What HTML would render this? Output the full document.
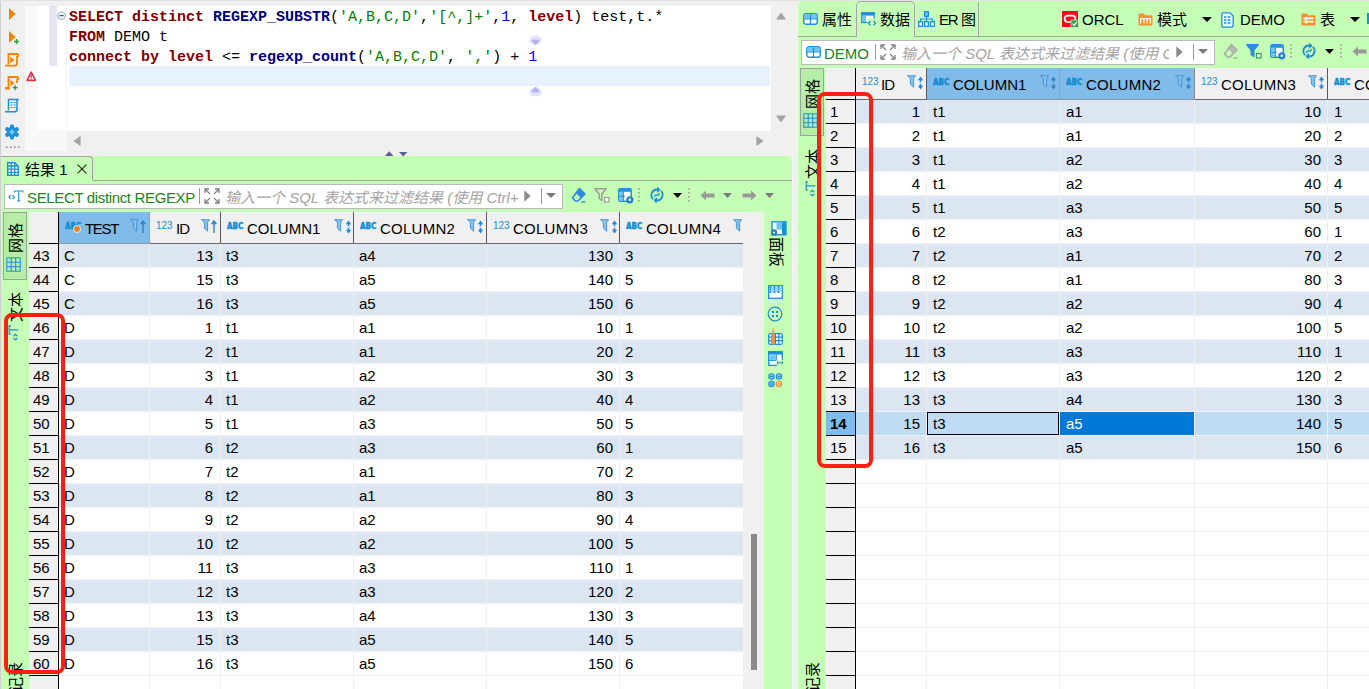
<!DOCTYPE html>
<html><head><meta charset="utf-8"><title>DBeaver</title>
<style>
html,body{margin:0;padding:0}
body{width:1369px;height:689px;overflow:hidden;position:relative;background:#f0f0f0;font-family:"Liberation Sans","Noto Sans CJK SC",sans-serif;font-size:15px;color:#000}
body div,body svg{position:absolute;display:block}
.t{white-space:nowrap;line-height:20px;height:20px}
.r{white-space:nowrap;line-height:20px;height:20px;text-align:right}
.code{font-family:"Liberation Mono",monospace;font-size:15px;white-space:pre;line-height:20px;height:20px;letter-spacing:0px}
.k{color:#800000;font-weight:bold}.f{color:#000080;font-weight:bold}.s{color:#008000}.n{color:#0000ff}
.ph{color:#a4a4a4;font-style:italic;white-space:nowrap;line-height:20px;overflow:hidden}
.rot{white-space:nowrap;line-height:16px;height:16px;font-size:15px;transform-origin:0 0}
</style></head><body>
<div style="left:0px;top:0px;width:1369px;height:1px;background:#e2e2e2;"></div>
<div style="left:0px;top:1px;width:1px;height:688px;background:#cfcfcf;"></div>
<div style="left:25px;top:6px;width:42px;height:145px;background:#f8f8f8;"></div>
<div style="left:37px;top:6px;width:30px;height:124px;background:#fff;"></div>
<div style="left:49px;top:6px;width:8px;height:60px;background:#e4e4f2;"></div>
<div style="left:66px;top:6px;width:1px;height:125px;background:#f2f2f2;"></div>
<div style="left:67px;top:6px;width:704px;height:125px;background:#fff;"></div>
<div style="left:69px;top:66px;width:701px;height:20px;background:#e8f2fe;"></div>
<svg style="left:57px;top:11px;" width="10" height="10" viewBox="0 0 10 10"><circle cx="4.6" cy="4.6" r="3.9" fill="#eef1f6" stroke="#9aa7b8" stroke-width="0.9"/><path d="M2.4 4.6 H6.8" stroke="#44546a" stroke-width="1.1"/></svg>
<div class="code" style="left:69px;top:8px"><span class="k">SELECT distinct</span> <span class="f">REGEXP_SUBSTR</span>(<span class="s">'A,B,C,D'</span>,<span class="s">'[^,]+'</span>,<span class="n">1</span>, <span class="k">level</span>) test,t.*</div>
<div class="code" style="left:69px;top:28px"><span class="k">FROM</span> DEMO t</div>
<div class="code" style="left:69px;top:48px"><span class="k">connect by level</span> &lt;= <span class="f">regexp_count</span>(<span class="s">'A,B,C,D'</span>, <span class="s">','</span>) + <span class="n">1</span></div>
<svg style="left:529px;top:35px;" width="13" height="11" viewBox="0 0 13 11"><ellipse cx="6.5" cy="5" rx="6.2" ry="4.6" fill="#e2e2fb"/><path d="M2.2 5.4 Q6.5 3.4 10.8 5.4 L6.5 10.4 Z" fill="#b4b4ec"/></svg>
<svg style="left:529px;top:86px;" width="13" height="11" viewBox="0 0 13 11"><ellipse cx="6.5" cy="6" rx="6.2" ry="4.6" fill="#e2e2fb"/><path d="M2.2 5.6 Q6.5 7.6 10.8 5.6 L6.5 0.6 Z" fill="#b4b4ec"/></svg>
<svg style="left:776px;top:12px;" width="10" height="8" viewBox="0 0 10 8"><path d="M5 0.5 L9.7 7 Q9.7 7.6 9 7.6 H1 Q0.3 7.6 0.3 7 Z" fill="#a3a3a3"/></svg>
<svg style="left:776px;top:115px;" width="10" height="8" viewBox="0 0 10 8"><path d="M5 7.5 L9.7 1 Q9.7 0.4 9 0.4 H1 Q0.3 0.4 0.3 1 Z" fill="#a3a3a3"/></svg>
<svg style="left:73px;top:136px;" width="8" height="10" viewBox="0 0 8 10"><path d="M0.5 5 L7 0.3 Q7.6 0.3 7.6 1 V9 Q7.6 9.7 7 9.7 Z" fill="#a3a3a3"/></svg>
<svg style="left:756px;top:136px;" width="8" height="10" viewBox="0 0 8 10"><path d="M7.5 5 L1 0.3 Q0.4 0.3 0.4 1 V9 Q0.4 9.7 1 9.7 Z" fill="#a3a3a3"/></svg>
<svg style="left:385px;top:151px;" width="9" height="5" viewBox="0 0 9 5"><path d="M0 5 L4.2 0.3 L8.4 5 Z" fill="#5c5c9c"/></svg>
<svg style="left:399px;top:152px;" width="9" height="5" viewBox="0 0 9 5"><path d="M0 0 H8.4 L4.2 4.6 Z" fill="#5c5c9c"/></svg>
<svg style="left:8px;top:7px;" width="9" height="14" viewBox="0 0 9 14"><path d="M1 1 L7.6 7 L1 13 Z" fill="#f28500"/></svg>
<svg style="left:8px;top:30px;" width="12" height="15" viewBox="0 0 12 15"><path d="M1 1 L7.6 7 L1 13 Z" fill="#f28500"/><path d="M8.5 9 V14 M6 11.5 H11" stroke="#2e9a2e" stroke-width="1.3"/></svg>
<svg style="left:4px;top:52px;" width="16" height="16" viewBox="0 0 16 16"><g fill="none" stroke="#f28500" stroke-width="1.8"><path d="M4.5 12.5 V2 H14.5 M14 2 V5"/><path d="M1 13.6 H11 Q13 13.6 13 11 V4"/></g><path d="M6.3 4.8 L10.6 8 L6.3 11.2 Z" fill="#f28500"/></svg>
<svg style="left:4px;top:75px;" width="16" height="16" viewBox="0 0 16 16"><g fill="none" stroke="#f28500" stroke-width="1.8"><path d="M4.5 12.5 V2 H14.5 M14 2 V5"/><path d="M13 8 V4"/></g><path d="M6.3 4.8 L10.6 8 L6.3 11.2 Z" fill="#f28500"/><rect x="1" y="12" width="5" height="2.6" fill="#f28500"/><path d="M11.2 10.2 V15.2 M8.7 12.7 H13.7" stroke="#2e9a2e" stroke-width="1.3"/></svg>
<svg style="left:4px;top:98px;" width="16" height="16" viewBox="0 0 16 16"><g fill="none" stroke="#1b8fd6" stroke-width="1.5"><path d="M4.5 12.5 V1.5 H14.8"/><path d="M1 13.8 H11 Q13 13.8 13 11 V2"/><path d="M6.5 4.5 H8.5 M9.8 4.5 H11.6 M6.5 7 H8.5 M9.8 7 H11.6 M6.5 9.5 H8.5 M9.8 9.5 H11.6" stroke-width="1.1"/></g></svg>
<svg style="left:4px;top:124px;" width="16" height="16" viewBox="0 0 16 16"><g transform="translate(8,8)"><g fill="#1b8fd6"><circle r="5.4"/><rect x="-1.9" y="-7.4" width="3.8" height="14.8" rx="0.8"/><rect x="-1.9" y="-7.4" width="3.8" height="14.8" rx="0.8" transform="rotate(60)"/><rect x="-1.9" y="-7.4" width="3.8" height="14.8" rx="0.8" transform="rotate(120)"/></g><path d="M0 -3 L3 0 L0 3 L-3 0 Z" fill="#6cc4f2"/></g></svg>
<svg style="left:6px;top:146px;" width="15" height="3" viewBox="0 0 15 3"><path d="M0 1.2 H15" stroke="#8c8c8c" stroke-width="1.6" stroke-dasharray="1.6 2.4"/></svg>
<svg style="left:26px;top:71px;" width="11" height="11" viewBox="0 0 11 11"><path d="M5.2 1.2 L9.4 9.4 H1 Z" fill="#fff" stroke="#e0304a" stroke-width="1.6" stroke-linejoin="round"/><path d="M5.2 3.8 V6.8 M5.2 7.6 V8.6" stroke="#e0304a" stroke-width="1.4"/></svg>
<div style="left:1px;top:156px;width:791px;height:533px;background:#c5ffb5;border-top-right-radius:5px"></div>
<div style="left:792px;top:157px;width:1px;height:532px;background:#f8f8f8;"></div>
<div style="left:1px;top:156px;width:92px;height:24px;border-top:1px solid #a3a3a3;border-right:1px solid #a3a3a3;border-top-right-radius:4px;box-sizing:border-box"></div>
<div style="left:93px;top:180px;width:699px;height:1px;background:#a3a3a3;"></div>
<svg style="left:7px;top:162px;" width="12" height="14" viewBox="0 0 12 14"><path d="M0.7 0.7 H7.8 L11.3 4.2 V13.3 H0.7 Z" fill="#fff" stroke="#1b8fd6" stroke-width="1.4"/><path d="M0.7 4 H11 M0.7 7.2 H11 M0.7 10.3 H11 M4.2 0.7 V13.3 M7.7 0.7 V13.3" stroke="#1b8fd6" stroke-width="1.3"/></svg>
<div class="t" style="left:25px;top:160px;">结果 1</div>
<svg style="left:77px;top:164px;" width="10" height="10" viewBox="0 0 10 10"><path d="M0.6 0.6 L9.4 9.4 M9.4 0.6 L0.6 9.4" stroke="#222" stroke-width="1.1"/></svg>
<div style="left:4px;top:184px;width:559px;height:25px;background:#fff;border:1px solid #b9b9b9;box-sizing:border-box"></div>
<svg style="left:8px;top:190px;" width="16" height="12" viewBox="0 0 16 12"><g fill="none" stroke="#1b8fd6" stroke-width="1.1"><path d="M2.6 5.2 L0.8 7 L2.6 8.8 M4.6 5.2 L6.4 7 L4.6 8.8"/><path d="M6.5 1 H15 M10.7 1 V11 M9 11 H12.5 M6.5 1 V2.6 M15 1 V2.6"/></g></svg>
<div class="t" style="left:27px;top:188px;color:#17851b;letter-spacing:-0.35px">SELECT distinct REGEXP</div>
<div style="left:199px;top:188px;width:1px;height:16px;background:#9a9a9a;"></div>
<svg style="left:204px;top:188px;" width="16" height="16" viewBox="0 0 16 16"><g stroke="#808080" stroke-width="1.3" fill="none"><path d="M1 5 V1 H5 M1 1 L6 6"/><path d="M11 1 H15 V5 M15 1 L10 6"/><path d="M1 11 V15 H5 M1 15 L6 10"/><path d="M11 15 H15 V11 M15 15 L10 10"/></g></svg>
<div class="ph" style="left:225px;top:188px;width:294px;height:20px">输入一个 SQL 表达式来过滤结果 (使用 Ctrl+空格)</div>
<svg style="left:524px;top:190px;" width="7" height="12" viewBox="0 0 7 12"><path d="M0.3 0.3 L6.7 6 L0.3 11.7 Z" fill="#8c8c8c"/></svg>
<div style="left:541px;top:188px;width:1px;height:16px;background:#9a9a9a;"></div>
<svg style="left:546px;top:193px;" width="10" height="5" viewBox="0 0 10 5"><path d="M0 0 H10 L5.0 5 Z" fill="#7a7a7a"/></svg>
<svg style="left:571px;top:187px;" width="16" height="16" viewBox="0 0 16 16"><path d="M8.5 1.5 L14 7 L7 14 L4.5 14 L1.5 11 Z" fill="none" stroke="#2d8be0" stroke-width="1.6" stroke-linejoin="round"/><path d="M8.5 1.5 L14 7 L10 11 L4.5 5.5 Z" fill="#2d8be0"/><path d="M10 15 H14.5" stroke="#2d8be0" stroke-width="1.3"/></svg>
<svg style="left:594px;top:188px;" width="16" height="15" viewBox="0 0 16 15"><path d="M0.8 0.8 H12.2 L7.8 6 V12.5 L5.2 10.5 V6 Z" fill="none" stroke="#9a9a9a" stroke-width="1.5" stroke-linejoin="round"/><rect x="10.5" y="9.5" width="4.5" height="4.5" fill="#fff" stroke="#9a9a9a" stroke-width="1.2"/></svg>
<svg style="left:618px;top:188px;" width="16" height="16" viewBox="0 0 16 16"><rect x="0.8" y="0.8" width="12.4" height="12.4" rx="1.5" fill="#fff" stroke="#1b8fd6" stroke-width="1.5"/><rect x="1.2" y="1.2" width="11.6" height="2.6" fill="#1b8fd6"/><rect x="1.5" y="4" width="3.6" height="8.6" fill="#7cc8f4"/><path d="M5.3 4 V13 M1 8.3 H7" stroke="#1b8fd6" stroke-width="1.1"/><circle cx="11.8" cy="11.8" r="3.6" fill="#2a7fd0"/><circle cx="11.8" cy="11.8" r="1.2" fill="#fff"/></svg>
<svg style="left:638px;top:188px;" width="2" height="14" viewBox="0 0 2 14"><path d="M1 0 V14" stroke="#b08a9a" stroke-width="1.6" stroke-dasharray="1.6 2.4"/></svg>
<svg style="left:649px;top:187px;" width="16" height="16" viewBox="0 0 16 16"><g transform="rotate(-40 8 8)"><g fill="none" stroke="#1b8fd6" stroke-width="1.8"><path d="M2.4 8.6 A5.6 5.6 0 0 1 12 4.2"/><path d="M13.6 7.4 A5.6 5.6 0 0 1 4 11.8"/><path d="M5.2 8.4 Q6.2 5.6 8 8 T10.8 7.6" stroke-width="1.3"/></g><path d="M13.9 1.6 V6.4 H9.1 Z M2.1 14.4 V9.6 H6.9 Z" fill="#1b8fd6"/></g></svg>
<svg style="left:673px;top:193px;" width="9" height="5" viewBox="0 0 9 5"><path d="M0 0 H9 L4.5 5 Z" fill="#000"/></svg>
<svg style="left:688px;top:188px;" width="2" height="14" viewBox="0 0 2 14"><path d="M1 0 V14" stroke="#b08a9a" stroke-width="1.6" stroke-dasharray="1.6 2.4"/></svg>
<svg style="left:700px;top:190px;" width="15" height="11" viewBox="0 0 15 11"><path d="M0.5 5.5 L6 0.5 V3.5 H14.5 V7.5 H6 V10.5 Z" fill="#9a9a9a"/></svg>
<svg style="left:723px;top:193px;" width="9" height="5" viewBox="0 0 9 5"><path d="M0 0 H9 L4.5 5 Z" fill="#7a7a7a"/></svg>
<svg style="left:742px;top:190px;" width="15" height="11" viewBox="0 0 15 11"><path d="M14.5 5.5 L9 0.5 V3.5 H0.5 V7.5 H9 V10.5 Z" fill="#9a9a9a"/></svg>
<svg style="left:765px;top:193px;" width="9" height="5" viewBox="0 0 9 5"><path d="M0 0 H9 L4.5 5 Z" fill="#7a7a7a"/></svg>
<div style="left:3px;top:212px;width:24px;height:68px;background:#b6eda9;border:1px solid #9aa59a;box-sizing:border-box"></div>
<div class="rot" style="left:8px;top:253px;transform:rotate(-90deg)">网格</div>
<svg style="left:6px;top:257px;" width="15" height="15" viewBox="0 0 15 15"><g fill="none" stroke="#1b8fd6" stroke-width="1"><rect x="0.8" y="0.8" width="13.4" height="13.4"/><path d="M0.8 5.2 H14.2 M0.8 9.7 H14.2 M5.2 0.8 V14.2 M9.7 0.8 V14.2"/></g></svg>
<div class="rot" style="left:8px;top:322px;transform:rotate(-90deg)">文本</div>
<svg style="left:8px;top:325px;" width="11" height="16" viewBox="0 0 11 16"><g fill="none" stroke="#1b8fd6" stroke-width="1.2"><path d="M0.4 0.8 H3 M0.4 9 H3 M1.2 0.8 V9 M1.2 4.9 H10.4"/><path d="M5.4 11.2 L7.4 9.4 L9.4 11.2 M5.4 13 L7.4 14.8 L9.4 13"/></g></svg>
<div class="rot" style="left:8px;top:692px;transform:rotate(-90deg)">记录</div>
<div style="left:29px;top:212px;width:29px;height:477px;background:#f0f0f0;"></div>
<div style="left:59px;top:212px;width:684px;height:32px;background:#f0f0f0;"></div>
<div style="left:59px;top:244px;width:684px;height:445px;background:#fff;"></div>
<div style="left:743px;top:212px;width:21px;height:477px;background:#f0f0f0;"></div>
<div style="left:59px;top:212px;width:90px;height:31px;background:#80bbea;"></div>
<div style="left:59px;top:244px;width:684px;height:24px;background:#dce6f2;"></div>
<div style="left:59px;top:292px;width:684px;height:24px;background:#dce6f2;"></div>
<div style="left:59px;top:340px;width:684px;height:24px;background:#dce6f2;"></div>
<div style="left:59px;top:388px;width:684px;height:24px;background:#dce6f2;"></div>
<div style="left:59px;top:436px;width:684px;height:24px;background:#dce6f2;"></div>
<div style="left:59px;top:484px;width:684px;height:24px;background:#dce6f2;"></div>
<div style="left:59px;top:532px;width:684px;height:24px;background:#dce6f2;"></div>
<div style="left:59px;top:580px;width:684px;height:24px;background:#dce6f2;"></div>
<div style="left:59px;top:628px;width:684px;height:24px;background:#dce6f2;"></div>
<div style="left:59px;top:267px;width:684px;height:1px;background:#efefef;"></div>
<div style="left:59px;top:291px;width:684px;height:1px;background:#efefef;"></div>
<div style="left:59px;top:315px;width:684px;height:1px;background:#efefef;"></div>
<div style="left:59px;top:339px;width:684px;height:1px;background:#efefef;"></div>
<div style="left:59px;top:363px;width:684px;height:1px;background:#efefef;"></div>
<div style="left:59px;top:387px;width:684px;height:1px;background:#efefef;"></div>
<div style="left:59px;top:411px;width:684px;height:1px;background:#efefef;"></div>
<div style="left:59px;top:435px;width:684px;height:1px;background:#efefef;"></div>
<div style="left:59px;top:459px;width:684px;height:1px;background:#efefef;"></div>
<div style="left:59px;top:483px;width:684px;height:1px;background:#efefef;"></div>
<div style="left:59px;top:507px;width:684px;height:1px;background:#efefef;"></div>
<div style="left:59px;top:531px;width:684px;height:1px;background:#efefef;"></div>
<div style="left:59px;top:555px;width:684px;height:1px;background:#efefef;"></div>
<div style="left:59px;top:579px;width:684px;height:1px;background:#efefef;"></div>
<div style="left:59px;top:603px;width:684px;height:1px;background:#efefef;"></div>
<div style="left:59px;top:627px;width:684px;height:1px;background:#efefef;"></div>
<div style="left:59px;top:651px;width:684px;height:1px;background:#efefef;"></div>
<div style="left:59px;top:675px;width:684px;height:1px;background:#efefef;"></div>
<div style="left:149px;top:244px;width:1px;height:445px;background:#efefef;"></div>
<div style="left:220px;top:244px;width:1px;height:445px;background:#efefef;"></div>
<div style="left:353px;top:244px;width:1px;height:445px;background:#efefef;"></div>
<div style="left:486px;top:244px;width:1px;height:445px;background:#efefef;"></div>
<div style="left:619px;top:244px;width:1px;height:445px;background:#efefef;"></div>
<div style="left:149px;top:212px;width:1px;height:31px;background:#93a5b5;"></div>
<div style="left:220px;top:212px;width:1px;height:32px;background:#5a5a5a;"></div>
<div style="left:353px;top:212px;width:1px;height:32px;background:#5a5a5a;"></div>
<div style="left:486px;top:212px;width:1px;height:32px;background:#5a5a5a;"></div>
<div style="left:619px;top:212px;width:1px;height:32px;background:#5a5a5a;"></div>
<div style="left:59px;top:243px;width:684px;height:1px;background:#6a6a6a;"></div>
<div style="left:59px;top:243px;width:91px;height:1px;background:#8a99a6;"></div>
<div style="left:58px;top:212px;width:1px;height:477px;background:#000;"></div>
<div style="left:29px;top:243px;width:30px;height:1px;background:#000;"></div>
<div style="left:29px;top:267px;width:30px;height:1px;background:#000;"></div>
<div style="left:29px;top:291px;width:30px;height:1px;background:#000;"></div>
<div style="left:29px;top:315px;width:30px;height:1px;background:#000;"></div>
<div style="left:29px;top:339px;width:30px;height:1px;background:#000;"></div>
<div style="left:29px;top:363px;width:30px;height:1px;background:#000;"></div>
<div style="left:29px;top:387px;width:30px;height:1px;background:#000;"></div>
<div style="left:29px;top:411px;width:30px;height:1px;background:#000;"></div>
<div style="left:29px;top:435px;width:30px;height:1px;background:#000;"></div>
<div style="left:29px;top:459px;width:30px;height:1px;background:#000;"></div>
<div style="left:29px;top:483px;width:30px;height:1px;background:#000;"></div>
<div style="left:29px;top:507px;width:30px;height:1px;background:#000;"></div>
<div style="left:29px;top:531px;width:30px;height:1px;background:#000;"></div>
<div style="left:29px;top:555px;width:30px;height:1px;background:#000;"></div>
<div style="left:29px;top:579px;width:30px;height:1px;background:#000;"></div>
<div style="left:29px;top:603px;width:30px;height:1px;background:#000;"></div>
<div style="left:29px;top:627px;width:30px;height:1px;background:#000;"></div>
<div style="left:29px;top:651px;width:30px;height:1px;background:#000;"></div>
<div style="left:29px;top:675px;width:30px;height:1px;background:#000;"></div>
<div class="t" style="left:33px;top:246px;">43</div>
<div class="t" style="left:64px;top:246px;">C</div>
<div class="r" style="left:150px;top:246px;width:63px">13</div>
<div class="t" style="left:226px;top:246px;">t3</div>
<div class="t" style="left:359px;top:246px;">a4</div>
<div class="r" style="left:487px;top:246px;width:126px">130</div>
<div class="t" style="left:625px;top:246px;">3</div>
<div class="t" style="left:33px;top:270px;">44</div>
<div class="t" style="left:64px;top:270px;">C</div>
<div class="r" style="left:150px;top:270px;width:63px">15</div>
<div class="t" style="left:226px;top:270px;">t3</div>
<div class="t" style="left:359px;top:270px;">a5</div>
<div class="r" style="left:487px;top:270px;width:126px">140</div>
<div class="t" style="left:625px;top:270px;">5</div>
<div class="t" style="left:33px;top:294px;">45</div>
<div class="t" style="left:64px;top:294px;">C</div>
<div class="r" style="left:150px;top:294px;width:63px">16</div>
<div class="t" style="left:226px;top:294px;">t3</div>
<div class="t" style="left:359px;top:294px;">a5</div>
<div class="r" style="left:487px;top:294px;width:126px">150</div>
<div class="t" style="left:625px;top:294px;">6</div>
<div class="t" style="left:33px;top:318px;">46</div>
<div class="t" style="left:64px;top:318px;">D</div>
<div class="r" style="left:150px;top:318px;width:63px">1</div>
<div class="t" style="left:226px;top:318px;">t1</div>
<div class="t" style="left:359px;top:318px;">a1</div>
<div class="r" style="left:487px;top:318px;width:126px">10</div>
<div class="t" style="left:625px;top:318px;">1</div>
<div class="t" style="left:33px;top:342px;">47</div>
<div class="t" style="left:64px;top:342px;">D</div>
<div class="r" style="left:150px;top:342px;width:63px">2</div>
<div class="t" style="left:226px;top:342px;">t1</div>
<div class="t" style="left:359px;top:342px;">a1</div>
<div class="r" style="left:487px;top:342px;width:126px">20</div>
<div class="t" style="left:625px;top:342px;">2</div>
<div class="t" style="left:33px;top:366px;">48</div>
<div class="t" style="left:64px;top:366px;">D</div>
<div class="r" style="left:150px;top:366px;width:63px">3</div>
<div class="t" style="left:226px;top:366px;">t1</div>
<div class="t" style="left:359px;top:366px;">a2</div>
<div class="r" style="left:487px;top:366px;width:126px">30</div>
<div class="t" style="left:625px;top:366px;">3</div>
<div class="t" style="left:33px;top:390px;">49</div>
<div class="t" style="left:64px;top:390px;">D</div>
<div class="r" style="left:150px;top:390px;width:63px">4</div>
<div class="t" style="left:226px;top:390px;">t1</div>
<div class="t" style="left:359px;top:390px;">a2</div>
<div class="r" style="left:487px;top:390px;width:126px">40</div>
<div class="t" style="left:625px;top:390px;">4</div>
<div class="t" style="left:33px;top:414px;">50</div>
<div class="t" style="left:64px;top:414px;">D</div>
<div class="r" style="left:150px;top:414px;width:63px">5</div>
<div class="t" style="left:226px;top:414px;">t1</div>
<div class="t" style="left:359px;top:414px;">a3</div>
<div class="r" style="left:487px;top:414px;width:126px">50</div>
<div class="t" style="left:625px;top:414px;">5</div>
<div class="t" style="left:33px;top:438px;">51</div>
<div class="t" style="left:64px;top:438px;">D</div>
<div class="r" style="left:150px;top:438px;width:63px">6</div>
<div class="t" style="left:226px;top:438px;">t2</div>
<div class="t" style="left:359px;top:438px;">a3</div>
<div class="r" style="left:487px;top:438px;width:126px">60</div>
<div class="t" style="left:625px;top:438px;">1</div>
<div class="t" style="left:33px;top:462px;">52</div>
<div class="t" style="left:64px;top:462px;">D</div>
<div class="r" style="left:150px;top:462px;width:63px">7</div>
<div class="t" style="left:226px;top:462px;">t2</div>
<div class="t" style="left:359px;top:462px;">a1</div>
<div class="r" style="left:487px;top:462px;width:126px">70</div>
<div class="t" style="left:625px;top:462px;">2</div>
<div class="t" style="left:33px;top:486px;">53</div>
<div class="t" style="left:64px;top:486px;">D</div>
<div class="r" style="left:150px;top:486px;width:63px">8</div>
<div class="t" style="left:226px;top:486px;">t2</div>
<div class="t" style="left:359px;top:486px;">a1</div>
<div class="r" style="left:487px;top:486px;width:126px">80</div>
<div class="t" style="left:625px;top:486px;">3</div>
<div class="t" style="left:33px;top:510px;">54</div>
<div class="t" style="left:64px;top:510px;">D</div>
<div class="r" style="left:150px;top:510px;width:63px">9</div>
<div class="t" style="left:226px;top:510px;">t2</div>
<div class="t" style="left:359px;top:510px;">a2</div>
<div class="r" style="left:487px;top:510px;width:126px">90</div>
<div class="t" style="left:625px;top:510px;">4</div>
<div class="t" style="left:33px;top:534px;">55</div>
<div class="t" style="left:64px;top:534px;">D</div>
<div class="r" style="left:150px;top:534px;width:63px">10</div>
<div class="t" style="left:226px;top:534px;">t2</div>
<div class="t" style="left:359px;top:534px;">a2</div>
<div class="r" style="left:487px;top:534px;width:126px">100</div>
<div class="t" style="left:625px;top:534px;">5</div>
<div class="t" style="left:33px;top:558px;">56</div>
<div class="t" style="left:64px;top:558px;">D</div>
<div class="r" style="left:150px;top:558px;width:63px">11</div>
<div class="t" style="left:226px;top:558px;">t3</div>
<div class="t" style="left:359px;top:558px;">a3</div>
<div class="r" style="left:487px;top:558px;width:126px">110</div>
<div class="t" style="left:625px;top:558px;">1</div>
<div class="t" style="left:33px;top:582px;">57</div>
<div class="t" style="left:64px;top:582px;">D</div>
<div class="r" style="left:150px;top:582px;width:63px">12</div>
<div class="t" style="left:226px;top:582px;">t3</div>
<div class="t" style="left:359px;top:582px;">a3</div>
<div class="r" style="left:487px;top:582px;width:126px">120</div>
<div class="t" style="left:625px;top:582px;">2</div>
<div class="t" style="left:33px;top:606px;">58</div>
<div class="t" style="left:64px;top:606px;">D</div>
<div class="r" style="left:150px;top:606px;width:63px">13</div>
<div class="t" style="left:226px;top:606px;">t3</div>
<div class="t" style="left:359px;top:606px;">a4</div>
<div class="r" style="left:487px;top:606px;width:126px">130</div>
<div class="t" style="left:625px;top:606px;">3</div>
<div class="t" style="left:33px;top:630px;">59</div>
<div class="t" style="left:64px;top:630px;">D</div>
<div class="r" style="left:150px;top:630px;width:63px">15</div>
<div class="t" style="left:226px;top:630px;">t3</div>
<div class="t" style="left:359px;top:630px;">a5</div>
<div class="r" style="left:487px;top:630px;width:126px">140</div>
<div class="t" style="left:625px;top:630px;">5</div>
<div class="t" style="left:33px;top:654px;">60</div>
<div class="t" style="left:64px;top:654px;">D</div>
<div class="r" style="left:150px;top:654px;width:63px">16</div>
<div class="t" style="left:226px;top:654px;">t3</div>
<div class="t" style="left:359px;top:654px;">a5</div>
<div class="r" style="left:487px;top:654px;width:126px">150</div>
<div class="t" style="left:625px;top:654px;">6</div>
<svg style="left:65px;top:221px;" width="18" height="10" viewBox="0 0 18 10"><text x="0" y="8.2" font-family="DejaVu Sans, sans-serif" font-weight="700" font-size="8.6" textLength="16.2" lengthAdjust="spacingAndGlyphs" fill="#0f8bd3" stroke="#0f8bd3" stroke-width="0.5">ABC</text></svg>
<svg style="left:73px;top:225px;" width="8" height="8" viewBox="0 0 8 8"><circle cx="4" cy="4" r="3.6" fill="#e8842c" stroke="#fff" stroke-width="0.8"/></svg>
<div class="t" style="left:85px;top:219px;letter-spacing:-1.3px">TEST</div>
<svg style="left:130px;top:219px;" width="10" height="14" viewBox="0 0 10 14"><path d="M0.5 0.7 H8.5 L6.6 3.4 V12.2 L3.4 9.2 V3.4 Z" fill="#86c4f0" stroke="#3d8fd0" stroke-width="0.9" stroke-linejoin="round"/></svg>
<svg style="left:140px;top:220px;" width="6" height="14" viewBox="0 0 6 14"><path d="M3 1 V13 M0.6 4.2 L3 1 L5.4 4.2" fill="none" stroke="#2f86cf" stroke-width="1.5"/></svg>
<svg style="left:156px;top:220px;" width="18" height="11" viewBox="0 0 18 11"><text x="0" y="9" font-family="Liberation Sans, sans-serif" font-size="11" textLength="16.5" lengthAdjust="spacingAndGlyphs" fill="#1b8fd6">123</text></svg>
<div class="t" style="left:176px;top:219px;letter-spacing:-0.9px">ID</div>
<svg style="left:201px;top:219px;" width="10" height="14" viewBox="0 0 10 14"><path d="M0.5 0.7 H8.5 L6.6 3.4 V12.2 L3.4 9.2 V3.4 Z" fill="#86c4f0" stroke="#3d8fd0" stroke-width="0.9" stroke-linejoin="round"/></svg>
<svg style="left:211px;top:220px;" width="6" height="14" viewBox="0 0 6 14"><path d="M3 1 V13 M0.6 4.2 L3 1 L5.4 4.2" fill="none" stroke="#2f86cf" stroke-width="1.5"/></svg>
<svg style="left:227px;top:221px;" width="18" height="10" viewBox="0 0 18 10"><text x="0" y="8.2" font-family="DejaVu Sans, sans-serif" font-weight="700" font-size="8.6" textLength="16.2" lengthAdjust="spacingAndGlyphs" fill="#0f8bd3" stroke="#0f8bd3" stroke-width="0.5">ABC</text></svg>
<div class="t" style="left:247px;top:219px;">COLUMN1</div>
<svg style="left:334px;top:219px;" width="10" height="14" viewBox="0 0 10 14"><path d="M0.5 0.7 H8.5 L6.6 3.4 V12.2 L3.4 9.2 V3.4 Z" fill="#86c4f0" stroke="#3d8fd0" stroke-width="0.9" stroke-linejoin="round"/></svg>
<svg style="left:345px;top:220px;" width="7" height="14" viewBox="0 0 7 14"><path d="M3.5 2 V6.2 M3.5 7.8 V12" fill="none" stroke="#2f86cf" stroke-width="1.6"/><path d="M0.8 4.2 L3.5 0.6 L6.2 4.2 Z M0.8 9.8 L3.5 13.4 L6.2 9.8 Z" fill="#2f86cf"/></svg>
<svg style="left:360px;top:221px;" width="18" height="10" viewBox="0 0 18 10"><text x="0" y="8.2" font-family="DejaVu Sans, sans-serif" font-weight="700" font-size="8.6" textLength="16.2" lengthAdjust="spacingAndGlyphs" fill="#0f8bd3" stroke="#0f8bd3" stroke-width="0.5">ABC</text></svg>
<div class="t" style="left:380px;top:219px;letter-spacing:0.25px">COLUMN2</div>
<svg style="left:467px;top:219px;" width="10" height="14" viewBox="0 0 10 14"><path d="M0.5 0.7 H8.5 L6.6 3.4 V12.2 L3.4 9.2 V3.4 Z" fill="#86c4f0" stroke="#3d8fd0" stroke-width="0.9" stroke-linejoin="round"/></svg>
<svg style="left:477px;top:220px;" width="7" height="14" viewBox="0 0 7 14"><path d="M3.5 2 V6.2 M3.5 7.8 V12" fill="none" stroke="#2f86cf" stroke-width="1.6"/><path d="M0.8 4.2 L3.5 0.6 L6.2 4.2 Z M0.8 9.8 L3.5 13.4 L6.2 9.8 Z" fill="#2f86cf"/></svg>
<svg style="left:493px;top:220px;" width="18" height="11" viewBox="0 0 18 11"><text x="0" y="9" font-family="Liberation Sans, sans-serif" font-size="11" textLength="16.5" lengthAdjust="spacingAndGlyphs" fill="#1b8fd6">123</text></svg>
<div class="t" style="left:513px;top:219px;letter-spacing:0.25px">COLUMN3</div>
<svg style="left:600px;top:219px;" width="10" height="14" viewBox="0 0 10 14"><path d="M0.5 0.7 H8.5 L6.6 3.4 V12.2 L3.4 9.2 V3.4 Z" fill="#86c4f0" stroke="#3d8fd0" stroke-width="0.9" stroke-linejoin="round"/></svg>
<svg style="left:611px;top:220px;" width="7" height="14" viewBox="0 0 7 14"><path d="M3.5 2 V6.2 M3.5 7.8 V12" fill="none" stroke="#2f86cf" stroke-width="1.6"/><path d="M0.8 4.2 L3.5 0.6 L6.2 4.2 Z M0.8 9.8 L3.5 13.4 L6.2 9.8 Z" fill="#2f86cf"/></svg>
<svg style="left:626px;top:221px;" width="18" height="10" viewBox="0 0 18 10"><text x="0" y="8.2" font-family="DejaVu Sans, sans-serif" font-weight="700" font-size="8.6" textLength="16.2" lengthAdjust="spacingAndGlyphs" fill="#0f8bd3" stroke="#0f8bd3" stroke-width="0.5">ABC</text></svg>
<div class="t" style="left:646px;top:219px;letter-spacing:0.25px">COLUMN4</div>
<svg style="left:733px;top:219px;" width="10" height="14" viewBox="0 0 10 14"><path d="M0.5 0.7 H8.5 L6.6 3.4 V12.2 L3.4 9.2 V3.4 Z" fill="#86c4f0" stroke="#3d8fd0" stroke-width="0.9" stroke-linejoin="round"/></svg>
<div style="left:751px;top:534px;width:6px;height:136px;background:#8a8a8a;"></div>
<svg style="left:771px;top:221px;" width="16" height="15" viewBox="0 0 16 15"><rect x="1" y="0.8" width="14" height="13" fill="#fff" stroke="#1b8fd6" stroke-width="1.4"/><rect x="5.5" y="1.2" width="5.5" height="7.5" fill="#6cc4f2"/><rect x="11" y="1.2" width="4" height="12.6" fill="#1b8fd6"/><circle cx="3" cy="11.5" r="3.2" fill="#2a7fd0"/><circle cx="3" cy="11.5" r="1" fill="#fff"/></svg>
<div class="rot" style="left:784px;top:237px;transform:rotate(90deg)">面板</div>
<svg style="left:768px;top:285px;" width="15" height="14" viewBox="0 0 15 14"><rect x="0.7" y="0.7" width="13.6" height="12.6" fill="#fff" stroke="#1b8fd6" stroke-width="1.3"/><path d="M1.5 2.2 H13.5 M1.5 4.6 H13.5 M1.5 7 H13.5" stroke="#1b8fd6" stroke-width="2" stroke-dasharray="2 2"/><path d="M3.5 3.4 H13.5 M3.5 5.8 H13.5" stroke="#6cc4f2" stroke-width="1.6" stroke-dasharray="2 2"/></svg>
<svg style="left:767px;top:306px;" width="16" height="16" viewBox="0 0 16 16"><circle cx="8" cy="8" r="6.8" fill="none" stroke="#1b8fd6" stroke-width="1.2"/><g fill="#1b8fd6"><rect x="5" y="5" width="2" height="2"/><rect x="9" y="5" width="2" height="2"/><rect x="5" y="9" width="2" height="2"/><rect x="9" y="9" width="2" height="2"/></g></svg>
<svg style="left:768px;top:328px;" width="15" height="17" viewBox="0 0 15 17"><rect x="0.7" y="5.7" width="13.6" height="10.6" rx="1.5" fill="#fff" stroke="#1b8fd6" stroke-width="1.3"/><path d="M0.7 9.2 H14.3 M0.7 12.7 H14.3 M4 6 V16 M7.4 6 V16 M10.8 6 V16" stroke="#1b8fd6" stroke-width="1.2"/><rect x="3.6" y="5.5" width="3.2" height="11" fill="#f0922e"/><path d="M5.2 0 V4 M3.6 2.6 L5.2 4.4 L6.8 2.6" stroke="#f0922e" stroke-width="1" fill="none"/></svg>
<svg style="left:768px;top:351px;" width="15" height="15" viewBox="0 0 15 15"><rect x="0.7" y="0.7" width="13.6" height="13.6" fill="#fff" stroke="#1b8fd6" stroke-width="1.3"/><rect x="1" y="1" width="13" height="2.6" fill="#1b8fd6"/><rect x="1.3" y="4.2" width="6.4" height="4.6" fill="#6cc4f2"/><path d="M8.3 3 V9.4 H1" stroke="#1b8fd6" stroke-width="1" fill="none"/><rect x="8.8" y="8.8" width="6.2" height="6.2" fill="#c5ffb5"/><path d="M9.2 11.8 H14.4 M9.4 10.2 V13.4 M14.2 10.2 V13.4" stroke="#1b8fd6" stroke-width="1"/></svg>
<svg style="left:768px;top:373px;" width="15" height="15" viewBox="0 0 15 15"><g fill="#7cc8f4" stroke="#1b8fd6" stroke-width="1.1"><circle cx="3.5" cy="3.5" r="2.7"/><circle cx="11" cy="3.5" r="2.7"/><circle cx="3.5" cy="11" r="2.7"/></g><circle cx="11" cy="11" r="2.7" fill="#ffd6a0" stroke="#f0922e" stroke-width="1.1"/><path d="M2 3.5 H5 M9.5 3.5 H12.5 M2 9.5 L5 12.5 M5 9.5 L2 12.5" stroke="#1b8fd6" stroke-width="1"/><path d="M9.5 11 H12.5" stroke="#f0922e" stroke-width="1.2"/></svg>
<div style="left:4px;top:313px;width:61px;height:361px;border:4px solid #ff1e0f;border-radius:8px;box-sizing:border-box"></div>
<div style="left:798px;top:1px;width:571px;height:688px;background:#c5ffb5;border-top-left-radius:5px"></div>
<div style="left:798px;top:36px;width:59px;height:1px;background:#a3a3a3;"></div>
<div style="left:856px;top:1px;width:59px;height:36px;border:1px solid #a3a3a3;border-bottom:none;border-radius:5px 5px 0 0;box-sizing:border-box"></div>
<div style="left:914px;top:36px;width:455px;height:1px;background:#a3a3a3;"></div>
<div style="left:978px;top:2px;width:1px;height:34px;background:#a3a3a3;"></div>
<svg style="left:803px;top:13px;" width="15" height="12" viewBox="0 0 15 12"><rect x="0.8" y="0.8" width="13.4" height="10.4" rx="2" fill="#fff" stroke="#1b8fd6" stroke-width="1.4"/><rect x="1.5" y="1.5" width="12" height="4.2" fill="#6cc4f2"/><path d="M1 6 H14 M7.5 1.5 V11" stroke="#1b8fd6" stroke-width="1.2"/></svg>
<div class="t" style="left:822px;top:10px;">属性</div>
<svg style="left:861px;top:12px;" width="16" height="15" viewBox="0 0 16 15"><rect x="0.8" y="0.8" width="12.4" height="9.6" fill="#fff" stroke="#1b8fd6" stroke-width="1.4"/><rect x="1" y="1" width="12" height="2.6" fill="#1b8fd6"/><rect x="1.4" y="4" width="3.6" height="6" fill="#6cc4f2"/><rect x="6.5" y="6.5" width="9" height="8" fill="#c5ffb5"/><path d="M9.6 9 L7.6 11.2 L9.6 13.4 M12.4 9 L14.4 11.2 L12.4 13.4" fill="none" stroke="#1b8fd6" stroke-width="1.3"/></svg>
<div class="t" style="left:880px;top:10px;">数据</div>
<svg style="left:918px;top:11px;" width="17" height="16" viewBox="0 0 17 16"><g fill="#fff" stroke="#1b8fd6" stroke-width="1.3"><rect x="6.6" y="0.7" width="3.8" height="4.6" fill="#6cc4f2"/><rect x="0.7" y="10.7" width="3.8" height="4.6"/><rect x="6.6" y="10.7" width="3.8" height="4.6"/><rect x="12.5" y="10.7" width="3.8" height="4.6"/></g><path d="M8.5 5.5 V10.5 M2.6 10.5 V8 H14.4 V10.5" fill="none" stroke="#1b8fd6" stroke-width="1.2"/></svg>
<div class="t" style="left:939px;top:10px;letter-spacing:-1.2px">ER</div>
<div class="t" style="left:961px;top:10px;">图</div>
<svg style="left:1062px;top:11px;" width="17" height="17" viewBox="0 0 17 17"><rect x="0" y="0" width="16" height="16" fill="#f80a1c"/><rect x="2.6" y="4.6" width="10.8" height="6.4" rx="3.2" fill="none" stroke="#fff" stroke-width="1.7"/><rect x="9" y="9" width="7.5" height="7.5" fill="#2aa04a" stroke="#e8f8e8" stroke-width="0.6"/><path d="M10.6 12.6 L12.2 14.4 L15 10.6" fill="none" stroke="#fff" stroke-width="1.3"/></svg>
<div class="t" style="left:1082px;top:10px;">ORCL</div>
<svg style="left:1138px;top:13px;" width="15" height="13" viewBox="0 0 15 13"><path d="M0.5 1.5 Q0.5 0.5 1.5 0.5 H5.5 L7 2.2 H13.5 Q14.5 2.2 14.5 3.2 V11.5 Q14.5 12.5 13.5 12.5 H1.5 Q0.5 12.5 0.5 11.5 Z" fill="#f0922e"/><path d="M2.6 5.6 H12.4 V10.4 M2.6 5.6 V10.4 M5.9 5.6 V10.4 M9.1 5.6 V10.4" fill="none" stroke="#fff" stroke-width="1.3"/></svg>
<div class="t" style="left:1157px;top:10px;">模式</div>
<svg style="left:1202px;top:17px;" width="10" height="5" viewBox="0 0 10 5"><path d="M0 0 H10 L5.0 5 Z" fill="#000"/></svg>
<svg style="left:1221px;top:12px;" width="13" height="16" viewBox="0 0 13 16"><path d="M2.5 0.8 H9 L12.2 4 V13 Q12.2 15.2 10 15.2 H2.5 Q0.8 15.2 0.8 13.5 V2.5 Q0.8 0.8 2.5 0.8 Z" fill="#eaf8ff" stroke="#1b8fd6" stroke-width="1.3"/><path d="M3 5 H5.4 M6.6 5 H9.4 M3 8 H5.4 M6.6 8 H9.4 M3 11 H5.4 M6.6 11 H9.4" stroke="#1b8fd6" stroke-width="1.4"/></svg>
<div class="t" style="left:1240px;top:10px;">DEMO</div>
<svg style="left:1301px;top:13px;" width="15" height="13" viewBox="0 0 15 13"><path d="M0.5 1.5 Q0.5 0.5 1.5 0.5 H5.5 L7 2.2 H13.5 Q14.5 2.2 14.5 3.2 V11.5 Q14.5 12.5 13.5 12.5 H1.5 Q0.5 12.5 0.5 11.5 Z" fill="#f0922e"/><path d="M2.4 5.4 H12.6 M2.4 8.6 H12.6 M5 4 V10.6" fill="none" stroke="#fff" stroke-width="1.7"/></svg>
<div class="t" style="left:1320px;top:10px;">表</div>
<svg style="left:1350px;top:17px;" width="10" height="5" viewBox="0 0 10 5"><path d="M0 0 H10 L5.0 5 Z" fill="#000"/></svg>
<div style="left:1367px;top:13px;width:2px;height:11px;background:#1b8fd6;"></div>
<div style="left:801px;top:40px;width:414px;height:25px;background:#fff;border:1px solid #b9b9b9;box-sizing:border-box"></div>
<svg style="left:806px;top:46px;" width="15" height="12" viewBox="0 0 15 12"><rect x="0.8" y="0.8" width="13.4" height="10.4" rx="2" fill="#fff" stroke="#1b8fd6" stroke-width="1.4"/><rect x="1.5" y="1.5" width="12" height="4.2" fill="#6cc4f2"/><path d="M1 6 H14 M7.5 1.5 V11" stroke="#1b8fd6" stroke-width="1.2"/></svg>
<div class="t" style="left:824px;top:44px;color:#17851b">DEMO</div>
<div style="left:875px;top:44px;width:1px;height:16px;background:#9a9a9a;"></div>
<svg style="left:880px;top:44px;" width="16" height="16" viewBox="0 0 16 16"><g stroke="#808080" stroke-width="1.3" fill="none"><path d="M1 5 V1 H5 M1 1 L6 6"/><path d="M11 1 H15 V5 M15 1 L10 6"/><path d="M1 11 V15 H5 M1 15 L6 10"/><path d="M11 15 H15 V11 M15 15 L10 10"/></g></svg>
<div class="ph" style="left:901px;top:44px;width:268px;height:20px">输入一个 SQL 表达式来过滤结果 (使用 Ctrl+空格)</div>
<svg style="left:1176px;top:46px;" width="7" height="12" viewBox="0 0 7 12"><path d="M0.3 0.3 L6.7 6 L0.3 11.7 Z" fill="#8c8c8c"/></svg>
<div style="left:1193px;top:44px;width:1px;height:16px;background:#9a9a9a;"></div>
<svg style="left:1198px;top:49px;" width="10" height="5" viewBox="0 0 10 5"><path d="M0 0 H10 L5.0 5 Z" fill="#7a7a7a"/></svg>
<svg style="left:1223px;top:43px;" width="16" height="16" viewBox="0 0 16 16"><path d="M8.5 1.5 L14 7 L7 14 L4.5 14 L1.5 11 Z" fill="none" stroke="#a9a9a9" stroke-width="1.6" stroke-linejoin="round"/><path d="M8.5 1.5 L14 7 L10 11 L4.5 5.5 Z" fill="#a9a9a9" opacity="0.75"/><path d="M10 15 H14.5" stroke="#a9a9a9" stroke-width="1.3"/></svg>
<svg style="left:1246px;top:44px;" width="16" height="15" viewBox="0 0 16 15"><path d="M0.8 0.8 H12.2 L7.8 6 V12.5 L5.2 10.5 V6 Z" fill="#2d8be0" stroke="#2d8be0" stroke-width="1.5" stroke-linejoin="round"/><rect x="10.5" y="9.5" width="4.5" height="4.5" fill="#fff" stroke="#2aa04a" stroke-width="1.2"/></svg>
<svg style="left:1270px;top:44px;" width="16" height="16" viewBox="0 0 16 16"><rect x="0.8" y="0.8" width="12.4" height="12.4" rx="1.5" fill="#fff" stroke="#1b8fd6" stroke-width="1.5"/><rect x="1.2" y="1.2" width="11.6" height="2.6" fill="#1b8fd6"/><rect x="1.5" y="4" width="3.6" height="8.6" fill="#7cc8f4"/><path d="M5.3 4 V13 M1 8.3 H7" stroke="#1b8fd6" stroke-width="1.1"/><circle cx="11.8" cy="11.8" r="3.6" fill="#2a7fd0"/><circle cx="11.8" cy="11.8" r="1.2" fill="#fff"/></svg>
<svg style="left:1290px;top:44px;" width="2" height="14" viewBox="0 0 2 14"><path d="M1 0 V14" stroke="#b08a9a" stroke-width="1.6" stroke-dasharray="1.6 2.4"/></svg>
<svg style="left:1301px;top:43px;" width="16" height="16" viewBox="0 0 16 16"><g transform="rotate(-40 8 8)"><g fill="none" stroke="#1b8fd6" stroke-width="1.8"><path d="M2.4 8.6 A5.6 5.6 0 0 1 12 4.2"/><path d="M13.6 7.4 A5.6 5.6 0 0 1 4 11.8"/><path d="M5.2 8.4 Q6.2 5.6 8 8 T10.8 7.6" stroke-width="1.3"/></g><path d="M13.9 1.6 V6.4 H9.1 Z M2.1 14.4 V9.6 H6.9 Z" fill="#1b8fd6"/></g></svg>
<svg style="left:1325px;top:49px;" width="9" height="5" viewBox="0 0 9 5"><path d="M0 0 H9 L4.5 5 Z" fill="#000"/></svg>
<svg style="left:1340px;top:44px;" width="2" height="14" viewBox="0 0 2 14"><path d="M1 0 V14" stroke="#b08a9a" stroke-width="1.6" stroke-dasharray="1.6 2.4"/></svg>
<svg style="left:1352px;top:46px;" width="15" height="11" viewBox="0 0 15 11"><path d="M0.5 5.5 L6 0.5 V3.5 H14.5 V7.5 H6 V10.5 Z" fill="#9a9a9a"/></svg>
<div style="left:800px;top:68px;width:24px;height:68px;background:#b6eda9;border:1px solid #9aa59a;box-sizing:border-box"></div>
<div class="rot" style="left:805px;top:109px;transform:rotate(-90deg)">网格</div>
<svg style="left:803px;top:113px;" width="15" height="15" viewBox="0 0 15 15"><g fill="none" stroke="#1b8fd6" stroke-width="1"><rect x="0.8" y="0.8" width="13.4" height="13.4"/><path d="M0.8 5.2 H14.2 M0.8 9.7 H14.2 M5.2 0.8 V14.2 M9.7 0.8 V14.2"/></g></svg>
<div class="rot" style="left:805px;top:179px;transform:rotate(-90deg)">文本</div>
<svg style="left:805px;top:181px;" width="11" height="16" viewBox="0 0 11 16"><g fill="none" stroke="#1b8fd6" stroke-width="1.2"><path d="M0.4 0.8 H3 M0.4 9 H3 M1.2 0.8 V9 M1.2 4.9 H10.4"/><path d="M5.4 11.2 L7.4 9.4 L9.4 11.2 M5.4 13 L7.4 14.8 L9.4 13"/></g></svg>
<div class="rot" style="left:805px;top:692px;transform:rotate(-90deg)">记录</div>
<div style="left:826px;top:68px;width:29px;height:621px;background:#f0f0f0;"></div>
<div style="left:856px;top:68px;width:513px;height:32px;background:#f0f0f0;"></div>
<div style="left:856px;top:100px;width:513px;height:589px;background:#fff;"></div>
<div style="left:927px;top:68px;width:268px;height:31px;background:#80bbea;"></div>
<div style="left:856px;top:100px;width:513px;height:24px;background:#dce6f2;"></div>
<div style="left:856px;top:148px;width:513px;height:24px;background:#dce6f2;"></div>
<div style="left:856px;top:196px;width:513px;height:24px;background:#dce6f2;"></div>
<div style="left:856px;top:244px;width:513px;height:24px;background:#dce6f2;"></div>
<div style="left:856px;top:292px;width:513px;height:24px;background:#dce6f2;"></div>
<div style="left:856px;top:340px;width:513px;height:24px;background:#dce6f2;"></div>
<div style="left:856px;top:388px;width:513px;height:24px;background:#dce6f2;"></div>
<div style="left:856px;top:412px;width:513px;height:24px;background:#c0dcf3;"></div>
<div style="left:826px;top:412px;width:29px;height:23px;background:#80bbea;"></div>
<div style="left:856px;top:436px;width:513px;height:24px;background:#dce6f2;"></div>
<div style="left:856px;top:123px;width:513px;height:1px;background:#efefef;"></div>
<div style="left:856px;top:147px;width:513px;height:1px;background:#efefef;"></div>
<div style="left:856px;top:171px;width:513px;height:1px;background:#efefef;"></div>
<div style="left:856px;top:195px;width:513px;height:1px;background:#efefef;"></div>
<div style="left:856px;top:219px;width:513px;height:1px;background:#efefef;"></div>
<div style="left:856px;top:243px;width:513px;height:1px;background:#efefef;"></div>
<div style="left:856px;top:267px;width:513px;height:1px;background:#efefef;"></div>
<div style="left:856px;top:291px;width:513px;height:1px;background:#efefef;"></div>
<div style="left:856px;top:315px;width:513px;height:1px;background:#efefef;"></div>
<div style="left:856px;top:339px;width:513px;height:1px;background:#efefef;"></div>
<div style="left:856px;top:363px;width:513px;height:1px;background:#efefef;"></div>
<div style="left:856px;top:387px;width:513px;height:1px;background:#efefef;"></div>
<div style="left:856px;top:411px;width:513px;height:1px;background:#efefef;"></div>
<div style="left:856px;top:435px;width:513px;height:1px;background:#efefef;"></div>
<div style="left:856px;top:459px;width:513px;height:1px;background:#efefef;"></div>
<div style="left:856px;top:483px;width:513px;height:1px;background:#efefef;"></div>
<div style="left:856px;top:507px;width:513px;height:1px;background:#efefef;"></div>
<div style="left:856px;top:531px;width:513px;height:1px;background:#efefef;"></div>
<div style="left:856px;top:555px;width:513px;height:1px;background:#efefef;"></div>
<div style="left:856px;top:579px;width:513px;height:1px;background:#efefef;"></div>
<div style="left:856px;top:603px;width:513px;height:1px;background:#efefef;"></div>
<div style="left:856px;top:627px;width:513px;height:1px;background:#efefef;"></div>
<div style="left:856px;top:651px;width:513px;height:1px;background:#efefef;"></div>
<div style="left:856px;top:675px;width:513px;height:1px;background:#efefef;"></div>
<div style="left:926px;top:100px;width:1px;height:589px;background:#efefef;"></div>
<div style="left:1059px;top:100px;width:1px;height:589px;background:#efefef;"></div>
<div style="left:1194px;top:100px;width:1px;height:589px;background:#efefef;"></div>
<div style="left:1327px;top:100px;width:1px;height:589px;background:#efefef;"></div>
<div style="left:1060px;top:412px;width:134px;height:23px;background:#0078d7;"></div>
<div style="left:927px;top:412px;width:132px;height:23px;border:1px solid #000;box-sizing:border-box"></div>
<div style="left:926px;top:68px;width:1px;height:32px;background:#5a5a5a;"></div>
<div style="left:1059px;top:68px;width:1px;height:31px;background:#8fa0b0;"></div>
<div style="left:1194px;top:68px;width:1px;height:32px;background:#8a8a8a;"></div>
<div style="left:1327px;top:68px;width:1px;height:32px;background:#5a5a5a;"></div>
<div style="left:856px;top:99px;width:513px;height:1px;background:#6a6a6a;"></div>
<div style="left:927px;top:99px;width:268px;height:1px;background:#8a99a6;"></div>
<div style="left:855px;top:68px;width:1px;height:621px;background:#000;"></div>
<div style="left:826px;top:99px;width:30px;height:1px;background:#000;"></div>
<div style="left:826px;top:123px;width:30px;height:1px;background:#000;"></div>
<div style="left:826px;top:147px;width:30px;height:1px;background:#000;"></div>
<div style="left:826px;top:171px;width:30px;height:1px;background:#000;"></div>
<div style="left:826px;top:195px;width:30px;height:1px;background:#000;"></div>
<div style="left:826px;top:219px;width:30px;height:1px;background:#000;"></div>
<div style="left:826px;top:243px;width:30px;height:1px;background:#000;"></div>
<div style="left:826px;top:267px;width:30px;height:1px;background:#000;"></div>
<div style="left:826px;top:291px;width:30px;height:1px;background:#000;"></div>
<div style="left:826px;top:315px;width:30px;height:1px;background:#000;"></div>
<div style="left:826px;top:339px;width:30px;height:1px;background:#000;"></div>
<div style="left:826px;top:363px;width:30px;height:1px;background:#000;"></div>
<div style="left:826px;top:387px;width:30px;height:1px;background:#000;"></div>
<div style="left:826px;top:411px;width:30px;height:1px;background:#000;"></div>
<div style="left:826px;top:435px;width:30px;height:1px;background:#000;"></div>
<div style="left:826px;top:459px;width:30px;height:1px;background:#000;"></div>
<div style="left:826px;top:483px;width:30px;height:1px;background:#000;"></div>
<div style="left:826px;top:507px;width:30px;height:1px;background:#000;"></div>
<div style="left:826px;top:531px;width:30px;height:1px;background:#000;"></div>
<div style="left:826px;top:555px;width:30px;height:1px;background:#000;"></div>
<div style="left:826px;top:579px;width:30px;height:1px;background:#000;"></div>
<div style="left:826px;top:603px;width:30px;height:1px;background:#000;"></div>
<div style="left:826px;top:627px;width:30px;height:1px;background:#000;"></div>
<div style="left:826px;top:651px;width:30px;height:1px;background:#000;"></div>
<div style="left:826px;top:675px;width:30px;height:1px;background:#000;"></div>
<div class="t" style="left:830px;top:102px;">1</div>
<div class="r" style="left:856px;top:102px;width:64px">1</div>
<div class="t" style="left:933px;top:102px;">t1</div>
<div class="t" style="left:1066px;top:102px;">a1</div>
<div class="r" style="left:1195px;top:102px;width:126px">10</div>
<div class="t" style="left:1334px;top:102px;">1</div>
<div class="t" style="left:830px;top:126px;">2</div>
<div class="r" style="left:856px;top:126px;width:64px">2</div>
<div class="t" style="left:933px;top:126px;">t1</div>
<div class="t" style="left:1066px;top:126px;">a1</div>
<div class="r" style="left:1195px;top:126px;width:126px">20</div>
<div class="t" style="left:1334px;top:126px;">2</div>
<div class="t" style="left:830px;top:150px;">3</div>
<div class="r" style="left:856px;top:150px;width:64px">3</div>
<div class="t" style="left:933px;top:150px;">t1</div>
<div class="t" style="left:1066px;top:150px;">a2</div>
<div class="r" style="left:1195px;top:150px;width:126px">30</div>
<div class="t" style="left:1334px;top:150px;">3</div>
<div class="t" style="left:830px;top:174px;">4</div>
<div class="r" style="left:856px;top:174px;width:64px">4</div>
<div class="t" style="left:933px;top:174px;">t1</div>
<div class="t" style="left:1066px;top:174px;">a2</div>
<div class="r" style="left:1195px;top:174px;width:126px">40</div>
<div class="t" style="left:1334px;top:174px;">4</div>
<div class="t" style="left:830px;top:198px;">5</div>
<div class="r" style="left:856px;top:198px;width:64px">5</div>
<div class="t" style="left:933px;top:198px;">t1</div>
<div class="t" style="left:1066px;top:198px;">a3</div>
<div class="r" style="left:1195px;top:198px;width:126px">50</div>
<div class="t" style="left:1334px;top:198px;">5</div>
<div class="t" style="left:830px;top:222px;">6</div>
<div class="r" style="left:856px;top:222px;width:64px">6</div>
<div class="t" style="left:933px;top:222px;">t2</div>
<div class="t" style="left:1066px;top:222px;">a3</div>
<div class="r" style="left:1195px;top:222px;width:126px">60</div>
<div class="t" style="left:1334px;top:222px;">1</div>
<div class="t" style="left:830px;top:246px;">7</div>
<div class="r" style="left:856px;top:246px;width:64px">7</div>
<div class="t" style="left:933px;top:246px;">t2</div>
<div class="t" style="left:1066px;top:246px;">a1</div>
<div class="r" style="left:1195px;top:246px;width:126px">70</div>
<div class="t" style="left:1334px;top:246px;">2</div>
<div class="t" style="left:830px;top:270px;">8</div>
<div class="r" style="left:856px;top:270px;width:64px">8</div>
<div class="t" style="left:933px;top:270px;">t2</div>
<div class="t" style="left:1066px;top:270px;">a1</div>
<div class="r" style="left:1195px;top:270px;width:126px">80</div>
<div class="t" style="left:1334px;top:270px;">3</div>
<div class="t" style="left:830px;top:294px;">9</div>
<div class="r" style="left:856px;top:294px;width:64px">9</div>
<div class="t" style="left:933px;top:294px;">t2</div>
<div class="t" style="left:1066px;top:294px;">a2</div>
<div class="r" style="left:1195px;top:294px;width:126px">90</div>
<div class="t" style="left:1334px;top:294px;">4</div>
<div class="t" style="left:830px;top:318px;">10</div>
<div class="r" style="left:856px;top:318px;width:64px">10</div>
<div class="t" style="left:933px;top:318px;">t2</div>
<div class="t" style="left:1066px;top:318px;">a2</div>
<div class="r" style="left:1195px;top:318px;width:126px">100</div>
<div class="t" style="left:1334px;top:318px;">5</div>
<div class="t" style="left:830px;top:342px;">11</div>
<div class="r" style="left:856px;top:342px;width:64px">11</div>
<div class="t" style="left:933px;top:342px;">t3</div>
<div class="t" style="left:1066px;top:342px;">a3</div>
<div class="r" style="left:1195px;top:342px;width:126px">110</div>
<div class="t" style="left:1334px;top:342px;">1</div>
<div class="t" style="left:830px;top:366px;">12</div>
<div class="r" style="left:856px;top:366px;width:64px">12</div>
<div class="t" style="left:933px;top:366px;">t3</div>
<div class="t" style="left:1066px;top:366px;">a3</div>
<div class="r" style="left:1195px;top:366px;width:126px">120</div>
<div class="t" style="left:1334px;top:366px;">2</div>
<div class="t" style="left:830px;top:390px;">13</div>
<div class="r" style="left:856px;top:390px;width:64px">13</div>
<div class="t" style="left:933px;top:390px;">t3</div>
<div class="t" style="left:1066px;top:390px;">a4</div>
<div class="r" style="left:1195px;top:390px;width:126px">130</div>
<div class="t" style="left:1334px;top:390px;">3</div>
<div class="t" style="left:830px;top:414px;font-weight:bold">14</div>
<div class="r" style="left:856px;top:414px;width:64px">15</div>
<div class="t" style="left:933px;top:414px;">t3</div>
<div class="t" style="left:1066px;top:414px;color:#fff">a5</div>
<div class="r" style="left:1195px;top:414px;width:126px">140</div>
<div class="t" style="left:1334px;top:414px;">5</div>
<div class="t" style="left:830px;top:438px;">15</div>
<div class="r" style="left:856px;top:438px;width:64px">16</div>
<div class="t" style="left:933px;top:438px;">t3</div>
<div class="t" style="left:1066px;top:438px;">a5</div>
<div class="r" style="left:1195px;top:438px;width:126px">150</div>
<div class="t" style="left:1334px;top:438px;">6</div>
<svg style="left:862px;top:76px;" width="18" height="11" viewBox="0 0 18 11"><text x="0" y="9" font-family="Liberation Sans, sans-serif" font-size="11" textLength="16.5" lengthAdjust="spacingAndGlyphs" fill="#1b8fd6">123</text></svg>
<div class="t" style="left:881px;top:75px;letter-spacing:-0.9px">ID</div>
<svg style="left:907px;top:75px;" width="10" height="14" viewBox="0 0 10 14"><path d="M0.5 0.7 H8.5 L6.6 3.4 V12.2 L3.4 9.2 V3.4 Z" fill="#86c4f0" stroke="#3d8fd0" stroke-width="0.9" stroke-linejoin="round"/></svg>
<svg style="left:917px;top:76px;" width="7" height="14" viewBox="0 0 7 14"><path d="M3.5 2 V6.2 M3.5 7.8 V12" fill="none" stroke="#2f86cf" stroke-width="1.6"/><path d="M0.8 4.2 L3.5 0.6 L6.2 4.2 Z M0.8 9.8 L3.5 13.4 L6.2 9.8 Z" fill="#2f86cf"/></svg>
<svg style="left:933px;top:77px;" width="18" height="10" viewBox="0 0 18 10"><text x="0" y="8.2" font-family="DejaVu Sans, sans-serif" font-weight="700" font-size="8.6" textLength="16.2" lengthAdjust="spacingAndGlyphs" fill="#0f8bd3" stroke="#0f8bd3" stroke-width="0.5">ABC</text></svg>
<div class="t" style="left:953px;top:75px;">COLUMN1</div>
<svg style="left:1040px;top:75px;" width="10" height="14" viewBox="0 0 10 14"><path d="M0.5 0.7 H8.5 L6.6 3.4 V12.2 L3.4 9.2 V3.4 Z" fill="#86c4f0" stroke="#3d8fd0" stroke-width="0.9" stroke-linejoin="round"/></svg>
<svg style="left:1050px;top:76px;" width="7" height="14" viewBox="0 0 7 14"><path d="M3.5 2 V6.2 M3.5 7.8 V12" fill="none" stroke="#2f86cf" stroke-width="1.6"/><path d="M0.8 4.2 L3.5 0.6 L6.2 4.2 Z M0.8 9.8 L3.5 13.4 L6.2 9.8 Z" fill="#2f86cf"/></svg>
<svg style="left:1066px;top:77px;" width="18" height="10" viewBox="0 0 18 10"><text x="0" y="8.2" font-family="DejaVu Sans, sans-serif" font-weight="700" font-size="8.6" textLength="16.2" lengthAdjust="spacingAndGlyphs" fill="#0f8bd3" stroke="#0f8bd3" stroke-width="0.5">ABC</text></svg>
<div class="t" style="left:1086px;top:75px;letter-spacing:0.25px">COLUMN2</div>
<svg style="left:1175px;top:75px;" width="10" height="14" viewBox="0 0 10 14"><path d="M0.5 0.7 H8.5 L6.6 3.4 V12.2 L3.4 9.2 V3.4 Z" fill="#86c4f0" stroke="#3d8fd0" stroke-width="0.9" stroke-linejoin="round"/></svg>
<svg style="left:1185px;top:76px;" width="7" height="14" viewBox="0 0 7 14"><path d="M3.5 2 V6.2 M3.5 7.8 V12" fill="none" stroke="#2f86cf" stroke-width="1.6"/><path d="M0.8 4.2 L3.5 0.6 L6.2 4.2 Z M0.8 9.8 L3.5 13.4 L6.2 9.8 Z" fill="#2f86cf"/></svg>
<svg style="left:1201px;top:76px;" width="18" height="11" viewBox="0 0 18 11"><text x="0" y="9" font-family="Liberation Sans, sans-serif" font-size="11" textLength="16.5" lengthAdjust="spacingAndGlyphs" fill="#1b8fd6">123</text></svg>
<div class="t" style="left:1221px;top:75px;letter-spacing:0.25px">COLUMN3</div>
<svg style="left:1308px;top:75px;" width="10" height="14" viewBox="0 0 10 14"><path d="M0.5 0.7 H8.5 L6.6 3.4 V12.2 L3.4 9.2 V3.4 Z" fill="#86c4f0" stroke="#3d8fd0" stroke-width="0.9" stroke-linejoin="round"/></svg>
<svg style="left:1318px;top:76px;" width="7" height="14" viewBox="0 0 7 14"><path d="M3.5 2 V6.2 M3.5 7.8 V12" fill="none" stroke="#2f86cf" stroke-width="1.6"/><path d="M0.8 4.2 L3.5 0.6 L6.2 4.2 Z M0.8 9.8 L3.5 13.4 L6.2 9.8 Z" fill="#2f86cf"/></svg>
<svg style="left:1334px;top:77px;" width="18" height="10" viewBox="0 0 18 10"><text x="0" y="8.2" font-family="DejaVu Sans, sans-serif" font-weight="700" font-size="8.6" textLength="16.2" lengthAdjust="spacingAndGlyphs" fill="#0f8bd3" stroke="#0f8bd3" stroke-width="0.5">ABC</text></svg>
<div class="t" style="left:1354px;top:75px;letter-spacing:0.25px">COLUMN4</div>
<div style="left:817px;top:92px;width:56px;height:376px;border:4px solid #ff1e0f;border-radius:8px;box-sizing:border-box"></div>
</body></html>
